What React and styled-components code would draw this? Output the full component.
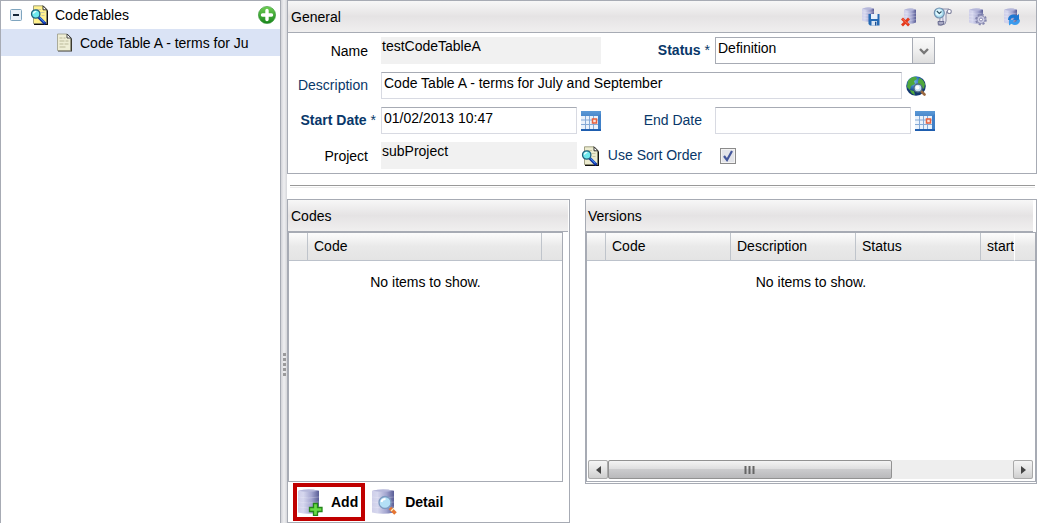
import React from 'react';
import styled, { createGlobalStyle, css } from 'styled-components';

const line = '#a7abb4';
const navy = '#083769';

const GlobalStyle = createGlobalStyle`
  * { box-sizing: border-box; }
  html, body, #root { height: 100%; }
  body {
    margin: 0;
    background: #fff;
    color: #000;
    font: 14px/18px "Liberation Sans", Arial, sans-serif;
  }
  button, input, select { font: inherit; color: inherit; }
  svg { display: block; flex: none; }
`;

const plainButton = css`
  border: 0;
  padding: 0;
  background: none;
  cursor: pointer;
`;

const Page = styled.div`
  display: flex;
  min-height: 100%;
  padding-right: 21px;
`;

const Tree = styled.nav`
  flex: 0 0 281px;
  border: 1px solid ${line};
  border-bottom: 0;
`;

const TreeRow = styled.div`
  display: flex;
  align-items: center;
  height: ${p => (p.$selected ? 27 : 28)}px;
  padding: 0 4px 0 ${p => (p.$selected ? 53 : 9)}px;
  background: ${p => (p.$selected ? '#dae3f5' : '#fff')};
`;

const IconButton = styled.button`
  ${plainButton}
  flex: none;
  display: block;
`;

const Toggle = styled(IconButton)`
  margin-right: 8px;
`;

const TreeLabel = styled.span`
  flex: 1;
  min-width: 0;
  margin-left: 5px;
  white-space: nowrap;
`;

const TreeLink = styled.a`
  width: 174px;
  margin-left: 6px;
  overflow: hidden;
  white-space: nowrap;
  color: inherit;
  text-decoration: none;
`;

const Splitter = styled.div`
  flex: 0 0 6px;
  display: flex;
  flex-direction: column;
  align-items: center;
  padding-top: 353px;
  gap: 2px;
  background: linear-gradient(90deg, #d2d3d8, #efeff1 50%, #d6d7db);
`;

const Grip = styled.i`
  width: 3px;
  height: 3px;
  background: #9a9a9c;
`;

const Main = styled.main`
  flex: 1;
  min-width: 0;
  display: flex;
  flex-direction: column;
`;

const Panel = styled.section`
  display: flex;
  flex-direction: column;
  border: 1px solid ${line};
`;

const PanelHeader = styled.header`
  display: flex;
  align-items: center;
  justify-content: space-between;
  height: 32px;
  margin-right: ${p => p.$inset || 0}px;
  padding: 0 14px 0 ${p => p.$pad}px;
  border-bottom: 1px solid ${line};
  background: linear-gradient(#f7f7f7, #e5e3e4 50%, #f0efef);
`;

const Title = styled.h2`
  margin: 0;
  font: inherit;
`;

const Tools = styled.div`
  display: flex;
  gap: 15px;
`;

const Form = styled.form`
  display: grid;
  grid-template-columns: 93px 220px 114px 220px;
  grid-auto-rows: 27px;
  row-gap: 8px;
  padding: 4px 0;
`;

const Label = styled.label`
  align-self: center;
  justify-self: end;
  padding-right: ${p => (p.$required ? 5 : 13)}px;
  padding-bottom: ${p => (p.$plain ? 0 : 2)}px;
  white-space: nowrap;
  color: ${p => (p.$plain ? '#000' : navy)};
`;

const Field = styled.div`
  display: flex;
  align-items: center;
  gap: 4px;
  min-width: 0;
  grid-column: span ${p => p.$span || 1};
  padding-right: ${p => (p.$span ? 9 : 0)}px;
`;

const TextBox = styled.input`
  flex: 1;
  min-width: 0;
  height: 27px;
  padding: 0 2px 6px;
  border: 1px solid #d8dae2;
  border-top-color: ${line};
  background: #fff;
`;

const ReadOnly = styled.output`
  flex: 1;
  height: 27px;
  padding: 0 1px;
  background: #f1f1f1;
`;

const SelectWrap = styled.div`
  position: relative;
  flex: 1;
`;

const Select = styled.select`
  appearance: none;
  display: block;
  width: 100%;
  height: 27px;
  padding: 0 24px 6px 2px;
  border: 1px solid ${line};
  border-radius: 0;
  background: #fff;
`;

const SelectArrow = styled.span`
  position: absolute;
  top: 0;
  right: 0;
  display: grid;
  place-items: center;
  width: 23px;
  height: 27px;
  border: 1px solid ${line};
  background: linear-gradient(#fafafa, #efefef 50%, #dedede);
  pointer-events: none;
`;

const CheckWrap = styled.span`
  position: relative;
  width: 16px;
  height: 16px;
  margin-left: 5px;
  svg { position: absolute; inset: 0; pointer-events: none; }
`;

const CheckInput = styled.input`
  appearance: none;
  display: block;
  width: 16px;
  height: 16px;
  margin: 0;
  border: 1px solid #8b8b8b;
  background: #e3e4e9;
  box-shadow: inset 0 0 0 1px #f3f3f3;
`;

const Divider = styled.hr`
  width: calc(100% - 5px);
  height: 3px;
  margin: 11px 2px 11px 3px;
  border: 0;
  border-top: 1px solid #999;
  border-bottom: 1px solid #ebebeb;
`;

const Lower = styled.div`
  flex: 1;
  display: flex;
  align-items: flex-start;
  gap: 15px;
`;

const CodesPanel = styled(Panel)`
  flex: 0 0 283px;
  align-self: stretch;
`;

const VersionsPanel = styled(Panel)`
  flex: 1;
  min-width: 0;
  height: 285px;
`;

const GridBox = styled.div`
  flex: 1;
  min-width: 0;
  display: flex;
  flex-direction: column;
  margin-right: ${p => p.$inset || 0}px;
  margin-bottom: ${p => p.$bottom || 0}px;
  border: 1px solid ${line};
`;

const Table = styled.table`
  width: 100%;
  table-layout: fixed;
  border-collapse: separate;
  border-spacing: 0;
`;

const Th = styled.th`
  width: ${p => (p.$w ? `${p.$w}px` : 'auto')};
  height: 28px;
  padding: 0 0 2px ${p => (p.$pad === 0 ? 0 : 6)}px;
  overflow: hidden;
  border-right: ${p => (p.$last ? 0 : 1)}px solid ${p => (p.$clip ? '#fff' : '#bfc4cb')};
  border-bottom: 1px solid #bcc2cb;
  background: linear-gradient(#fcfcfc, #e9e9e9 50%, #e4e4e4);
  text-align: left;
  font-weight: normal;
  white-space: nowrap;
`;

const Empty = styled.td`
  height: 42px;
  padding: 0;
  text-align: center;
`;

const Scrollbar = styled.div`
  display: flex;
  height: 19px;
  margin: auto 2px 2px 1px;
  background: #eee;
`;

const ScrollButton = styled.button`
  ${plainButton}
  display: grid;
  place-items: center;
  width: 20px;
  border: 1px solid #aaa;
  border-radius: 2px;
  background: linear-gradient(#f5f5f5, #e4e4e4 50%, #cfcfcf);
`;

const ScrollTrack = styled.div`
  flex: 1;
`;

const ScrollThumb = styled.div`
  display: grid;
  place-items: center;
  width: 70%;
  height: 100%;
  border: 1px solid #929292;
  border-radius: 2px;
  background: linear-gradient(#f4f4f4, #dfdfe0 45%, #cbcbcd 50%, #b9b9bb);
`;

const Footer = styled.footer`
  display: flex;
  align-items: center;
  height: 40px;
  padding-left: 5px;
  gap: 2px;
`;

const ActionButton = styled.button`
  ${plainButton}
  display: flex;
  align-items: center;
  gap: 5px;
  height: 38px;
  padding: 0 3px 0 1px;
  border: 4px solid ${p => (p.$marked ? '#c00000' : 'transparent')};
  font-weight: bold;
`;

const HiddenDefs = styled.svg`
  position: absolute;
`;

const Svg = ({ size = 20, box = 20, children }) => (
  <svg width={size} height={size} viewBox={`0 0 ${box} ${box}`} aria-hidden="true">{children}</svg>
);

const Gradients = () => (
  <HiddenDefs width="0" height="0" aria-hidden="true">
    <defs>
      <linearGradient id="db">
        <stop offset="0" stopColor="#cfcfe9" />
        <stop offset="0.25" stopColor="#d6d7ee" />
        <stop offset="0.65" stopColor="#a3a5cf" />
        <stop offset="1" stopColor="#595d96" />
      </linearGradient>
      <linearGradient id="blue" x2="0" y2="1">
        <stop offset="0" stopColor="#5b99d6" />
        <stop offset="1" stopColor="#1d5cae" />
      </linearGradient>
      <linearGradient id="green" x2="0" y2="1">
        <stop offset="0" stopColor="#71cf55" />
        <stop offset="1" stopColor="#17851b" />
      </linearGradient>
      <radialGradient id="globe" cx="0.4" cy="0.3">
        <stop offset="0" stopColor="#77b7ee" />
        <stop offset="0.6" stopColor="#2f70bd" />
        <stop offset="1" stopColor="#12386f" />
      </radialGradient>
    </defs>
  </HiddenDefs>
);

const Cylinder = ({ x = 1, y = 1, w = 13, h = 15 }) => (
  <g transform={`translate(${x} ${y})`}>
    <path d={`M0 1.8 Q${w / 2} -1 ${w} 1.800 V${h - 1.5} Q${w / 2} ${h + 1} 0 ${h - 1.5}Z`} fill="url(#db)" />
    <path d={`M0.300 1.800 Q${w / 2} -0.800 ${w - 0.3} 1.800 Q${w / 2} 3.800 0.300 1.800Z`} fill="#b5b7da" />
    {[0.32, 0.52, 0.72].map(k => (
      <path key={k} d={`M0 ${h * k} Q${w / 2} ${h * k + 2} ${w} ${h * k}`} stroke="#f2f2fa" strokeWidth="0.6" fill="none" opacity="0.45" />
    ))}
  </g>
);

const SaveIcon = () => (
  <Svg>
    <Cylinder x={0} y={0} w={12} h={15} />
    <path d="M6.500 7h11v11.500H8L6.500 17z" fill="#2469b4" />
    <path d="M9 7h6.500v5H9z" fill="#e6f0fb" />
    <path d="M9.500 14h5.500v4.500H9.500z" fill="#dbe6f4" />
    <path d="M13 14.800h1.400v3.700H13z" fill="#1c4f91" />
  </Svg>
);

const DeleteIcon = () => (
  <Svg>
    <Cylinder x={7} y={1} w={12} h={16} />
    <path d="M5 11.500L12 18.500M12 11.500L5 18.500" stroke="#e43a1d" strokeWidth="2.800" />
    <path d="M5.500 11.800L10.500 16.800" stroke="#ff8062" strokeWidth="0.800" />
  </Svg>
);

const HistoryIcon = () => (
  <Svg>
    <path d="M8 2h9q-3 2-3 6v6q0 4-4 4H6q2-2 2-6z" fill="#e9e9f2" stroke="#8587a3" strokeWidth="0.900" />
    <path d="M11 7l1 8-2 2V9z" fill="#b9bad0" />
    <circle cx="17.300" cy="4.500" r="2" fill="#fff" stroke="#8587a3" strokeWidth="1.100" />
    <path d="M6 14.500h6q.5 3.500-3 3.500H8q-2.500 0-2-3.500z" fill="#a9aac4" stroke="#62648a" strokeWidth="0.900" />
    <circle cx="7.300" cy="6" r="5" fill="#a9dcee" stroke="#7391b0" strokeWidth="1.200" />
    <circle cx="6.800" cy="5.500" r="3.200" fill="#dff7ff" />
    <path d="M4.800 4l2.500 2.500L9.500 4.500" stroke="#2c5062" strokeWidth="1.100" fill="none" />
  </Svg>
);

const SettingsIcon = () => (
  <Svg>
    <Cylinder x={2} y={1} w={14} h={16} />
    <circle cx="14" cy="12.500" r="4.600" fill="none" stroke="#8385ae" strokeWidth="2.400" strokeDasharray="2 1.610" />
    <circle cx="14" cy="12.500" r="4" fill="#cfcfe5" stroke="#8586ad" strokeWidth="0.800" />
    <circle cx="14" cy="12.500" r="1.500" fill="#fff" stroke="#8788b1" />
  </Svg>
);

const RefreshIcon = () => (
  <Svg>
    <Cylinder x={2} y={1} w={13} h={16} />
    <path d="M6 13q0-5 5-5.500 2 0 3.500 1.200L17 7v6h-6l1.500-2q-3-1-4 2z" fill="#1e78d2" />
    <path d="M18 12.500q0 5-5 5.500-2 0-3.500-1.200L7 18.500v-5.500h5l-1 2q3 1 4-2z" fill="#3a9bee" />
  </Svg>
);

const PageLens = ({ fill = '#ecebcf' }) => (
  <Svg>
    <path d="M4 1h9.500L18 5.500V20H4z" fill="#111" />
    <path d="M3.500.8h9.500l3.500 3.500v14.200h-13z" fill={fill} stroke="#8d8b6c" strokeWidth="0.800" />
    <path d="M13 .8v4h4z" fill="#fff" stroke="#222" strokeWidth="0.900" />
    <path d="M6 4.500h5M10.500 7.500h4M11.500 10.500h3" stroke="#c9c6a2" />
    <path d="M8.500 12l7 7" stroke="#0a2a9c" strokeWidth="3" />
    <path d="M9.500 12.300l5 5" stroke="#3f8cf5" strokeWidth="1.200" />
    <circle cx="5.700" cy="9" r="4.200" fill="#6fe9ee" stroke="#22607d" strokeWidth="1.300" />
    <path d="M3.300 8.500q.8-2 3-2" stroke="#fff" strokeWidth="1.200" fill="none" />
  </Svg>
);

const CalendarIcon = () => (
  <Svg>
    <path d="M0 0h20v20H0z" fill="url(#blue)" />
    <path d="M0 5h17v13H0z" fill="#eaf2fb" />
    <path d="M4.500 5v13M8.500 5v13M12.500 5v13M0 9h17M0 13.500h17" stroke="#86aad6" strokeWidth="1" />
    <path d="M17 5l3-2v15h-3z" fill="#3f80c8" />
    <path d="M11.500 8h4v4h-4z" fill="#fbe3da" stroke="#e8623f" strokeWidth="1.500" />
  </Svg>
);

const GlobeIcon = () => (
  <Svg>
    <circle cx="10" cy="10" r="9.800" fill="url(#globe)" />
    <path d="M2 5q4-5 8-4l1 2-3 2 1 3-4 2-1 4-3-3zM13 2q4 1 6 6l-1 5-3-3-3 0 0-4zM4 14l4 1 1 4q-4-1-5-5z" fill="#4fa83c" />
    <path d="M15 15l3.500 3.500" stroke="#9b6940" strokeWidth="2.600" strokeLinecap="round" />
    <circle cx="12" cy="12" r="4" fill="#c4dff3" stroke="#4f6a82" strokeWidth="1.300" />
    <circle cx="11.500" cy="11.500" r="2" fill="#fff" />
  </Svg>
);

const PlusIcon = () => (
  <Svg size={18} box={18}>
    <circle cx="9" cy="9" r="8.600" fill="url(#green)" stroke="#329334" strokeWidth="0.600" />
    <path d="M9 4.500v9M4.500 9h9" stroke="#fff" strokeWidth="3.400" strokeLinecap="round" />
  </Svg>
);

const MinusBox = () => (
  <Svg size={12} box={12}>
    <rect x="0.500" y="0.500" width="11" height="11" rx="1" fill="#e9f0f6" stroke="#7fa5bf" />
    <path d="M3 6h6" stroke="#152638" strokeWidth="2" />
  </Svg>
);

const DocIcon = () => (
  <Svg>
    <path d="M4 1.500h10l4 4v13H4z" fill="#3a392e" />
    <path d="M3.500 1h9.500l3.500 3.500v13h-13z" fill="#efeed6" stroke="#9b9a86" strokeWidth="0.800" />
    <path d="M13 1v4h4z" fill="#fff" stroke="#333" strokeWidth="0.900" />
    <path d="M5.500 5h3M9.500 5h2M5.500 8h5M11.500 8h3M5.500 11h4M10.500 11h4M5.500 14h6" stroke="#bbb99a" />
  </Svg>
);

const AddIcon = () => (
  <Svg size={28} box={28}>
    <Cylinder x={0} y={1} w={21} h={25} />
    <path d="M15.500 15.500h4v4h4.500v4h-4.500v4h-4v-4H11.500v-4h4z" fill="#69dc45" stroke="#24851b" strokeWidth="1.300" />
  </Svg>
);

const DetailIcon = () => (
  <Svg size={28} box={28}>
    <Cylinder x={0} y={1} w={22} h={25} />
    <path d="M18 20l5.500 5.500" stroke="#e67632" strokeWidth="3.600" />
    <path d="M19 23l3-3" stroke="#fff0c5" strokeWidth="1.200" />
    <circle cx="13" cy="14.500" r="6" fill="#b4e0f6" stroke="#7d9ac0" strokeWidth="1.300" />
    <path d="M9.500 14q.5-3 4-3" stroke="#fff" strokeWidth="1.800" fill="none" />
  </Svg>
);

const tools = [
  ['Save', SaveIcon],
  ['Delete', DeleteIcon],
  ['History', HistoryIcon],
  ['Settings', SettingsIcon],
  ['Refresh', RefreshIcon],
];

const DataGrid = ({ columns }) => (
  <Table>
    <thead>
      <tr>
        {columns.map((c, i) => (
          <Th key={i} $w={c.w} $pad={c.name ? 6 : 0} $clip={c.clip} $last={i === columns.length - 1}>{c.name}</Th>
        ))}
      </tr>
    </thead>
    <tbody>
      <tr><Empty colSpan={columns.length}>No items to show.</Empty></tr>
    </tbody>
  </Table>
);

const codeColumns = [{ w: 19 }, { name: 'Code' }, { w: 20 }];
const versionColumns = [
  { w: 19 },
  { name: 'Code', w: 125 },
  { name: 'Description', w: 125 },
  { name: 'Status', w: 125 },
  { name: 'start', clip: true },
  { w: 20 },
];

export default function App() {
  return (
    <>
      <GlobalStyle />
      <Gradients />
      <Page>
        <Tree aria-label="Code tables">
          <TreeRow>
            <Toggle aria-label="Collapse"><MinusBox /></Toggle>
            <PageLens fill="#fff18d" />
            <TreeLabel>CodeTables</TreeLabel>
            <IconButton aria-label="Add code table"><PlusIcon /></IconButton>
          </TreeRow>
          <TreeRow $selected>
            <DocIcon />
            <TreeLink href="#code-table-a">Code Table A - terms for Ju</TreeLink>
          </TreeRow>
        </Tree>
        <Splitter>
          <Grip /><Grip /><Grip /><Grip /><Grip />
        </Splitter>
        <Main>
          <Panel>
            <PanelHeader $pad={3}>
              <Title>General</Title>
              <Tools>
                {tools.map(([name, Icon]) => (
                  <IconButton key={name} aria-label={name}><Icon /></IconButton>
                ))}
              </Tools>
            </PanelHeader>
            <Form>
              <Label htmlFor="name" $plain>Name</Label>
              <Field><ReadOnly id="name">testCodeTableA</ReadOnly></Field>
              <Label htmlFor="status" $required><b>Status</b> *</Label>
              <Field>
                <SelectWrap>
                  <Select id="status" defaultValue="Definition"><option>Definition</option></Select>
                  <SelectArrow>
                    <svg width="10" height="8" viewBox="0 0 10 8"><path d="M1 2l4 4 4-4" stroke="#777" strokeWidth="2.400" fill="none" /></svg>
                  </SelectArrow>
                </SelectWrap>
              </Field>
              <Label htmlFor="description">Description</Label>
              <Field $span={3}>
                <TextBox id="description" defaultValue="Code Table A - terms for July and September" />
                <IconButton type="button" aria-label="Translate"><GlobeIcon /></IconButton>
              </Field>
              <Label htmlFor="start" $required><b>Start Date</b> *</Label>
              <Field>
                <TextBox id="start" defaultValue="01/02/2013 10:47" />
                <IconButton type="button" aria-label="Pick start date"><CalendarIcon /></IconButton>
              </Field>
              <Label htmlFor="end">End Date</Label>
              <Field>
                <TextBox id="end" />
                <IconButton type="button" aria-label="Pick end date"><CalendarIcon /></IconButton>
              </Field>
              <Label htmlFor="project" $plain>Project</Label>
              <Field>
                <ReadOnly id="project">subProject</ReadOnly>
                <IconButton type="button" aria-label="Find project"><PageLens /></IconButton>
              </Field>
              <Label htmlFor="sort">Use Sort Order</Label>
              <Field>
                <CheckWrap>
                  <CheckInput id="sort" type="checkbox" defaultChecked />
                  <Svg size={16} box={16}><path d="M4 8l3 4 5-9" stroke="#44579b" strokeWidth="2.200" fill="none" /></Svg>
                </CheckWrap>
              </Field>
            </Form>
          </Panel>
          <Divider />
          <Lower>
            <CodesPanel>
              <PanelHeader $pad={3} $inset={1}><Title>Codes</Title></PanelHeader>
              <GridBox $inset={6}>
                <DataGrid columns={codeColumns} />
              </GridBox>
              <Footer>
                <ActionButton $marked><AddIcon />Add</ActionButton>
                <ActionButton><DetailIcon />Detail</ActionButton>
              </Footer>
            </CodesPanel>
            <VersionsPanel>
              <PanelHeader $pad={2} $inset={3}><Title>Versions</Title></PanelHeader>
              <GridBox $bottom={1}>
                <DataGrid columns={versionColumns} />
                <Scrollbar>
                  <ScrollButton aria-label="Scroll left">
                    <svg width="5" height="8" viewBox="0 0 5 8"><path d="M5 0v8L0 4z" fill="#444" /></svg>
                  </ScrollButton>
                  <ScrollTrack>
                    <ScrollThumb>
                      <svg width="11" height="8" viewBox="0 0 11 8"><path d="M1.500 0v8M5.500 0v8M9.500 0v8" stroke="#666" strokeWidth="2" /></svg>
                    </ScrollThumb>
                  </ScrollTrack>
                  <ScrollButton aria-label="Scroll right">
                    <svg width="5" height="8" viewBox="0 0 5 8"><path d="M0 0v8l5-4z" fill="#444" /></svg>
                  </ScrollButton>
                </Scrollbar>
              </GridBox>
            </VersionsPanel>
          </Lower>
        </Main>
      </Page>
    </>
  );
}
